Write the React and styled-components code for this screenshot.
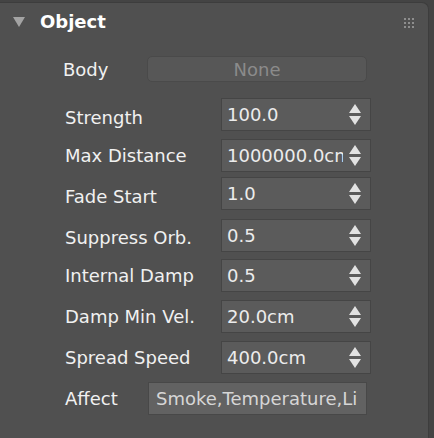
import styled, { createGlobalStyle } from "styled-components";

const Global = createGlobalStyle`
  html, body {
    margin: 0;
    background: #444444;
  }
  body {
    font-family: "DejaVu Sans", "Noto Sans", sans-serif;
  }
`;

const Panel = styled.div`
  width: 429px;
  height: 436px;
  margin-top: 2px;
  background: #505050;
  border-top: 1px solid #3d3d3d;
  border-right: 1px solid #3d3d3d;
  border-top-right-radius: 7px;
  box-sizing: border-box;
  display: flex;
  flex-direction: column;
`;

const Header = styled.div`
  height: 38px;
  display: flex;
  align-items: center;
  padding: 0 14px 0 13px;
`;

const Caret = styled.div`
  width: 0;
  height: 0;
  border-left: 6px solid transparent;
  border-right: 6px solid transparent;
  border-top: 10px solid #a3a3a3;
  margin-right: 15px;
`;

const Title = styled.div`
  flex: 1;
  color: #ffffff;
  font-size: 18px;
  font-weight: 700;
  margin-top: -1px;
`;

const Grip = styled.div`
  display: grid;
  grid-template-columns: repeat(3, 2px);
  gap: 2px;
  margin-top: 2px;
  span {
    width: 2px;
    height: 2px;
    background: #8e8e8e;
  }
`;

const BodyRow = styled.div`
  display: flex;
  align-items: center;
  padding-left: 63px;
  margin-top: 15px;
  height: 26px;
`;

const Label = styled.div`
  width: ${(p) => p.$w}px;
  color: #f1f1f1;
  font-size: 18px;
  white-space: nowrap;
  margin-top: ${(p) => p.$drop || 0}px;
`;

const NoneBox = styled.div`
  width: 220px;
  height: 26px;
  box-sizing: border-box;
  background: #575757;
  border: 1px solid #4a4a4a;
  border-radius: 5px;
  color: #8b8b8b;
  font-size: 18px;
  display: flex;
  align-items: center;
  justify-content: center;
`;

const Rows = styled.div`
  display: flex;
  flex-direction: column;
  gap: 7px;
  margin-top: 16px;
  padding-left: 65px;
`;

const Row = styled.div`
  display: flex;
  align-items: center;
  height: 33px;
  margin-top: ${(p) => p.$shift || 0}px;
`;

const Spinner = styled.div`
  width: 150px;
  height: 33px;
  box-sizing: border-box;
  background: #5b5b5b;
  border: 1px solid #454545;
  display: flex;
  align-items: center;
  overflow: hidden;
`;

const Value = styled.div`
  flex: 1;
  min-width: 0;
  overflow: hidden;
  white-space: nowrap;
  color: #ececec;
  font-size: 18px;
  padding-left: 5px;
`;

const Arrows = styled.div`
  width: 24px;
  height: 100%;
  display: flex;
  flex-direction: column;
  align-items: center;
  justify-content: center;
  gap: 3px;
  flex-shrink: 0;
  padding-right: 3px;
`;

const Up = styled.div`
  width: 0;
  height: 0;
  border-left: 6px solid transparent;
  border-right: 6px solid transparent;
  border-bottom: 9px solid #e2e2e2;
`;

const Down = styled(Up)`
  border-bottom: none;
  border-top: 9px solid #e2e2e2;
`;

const AffectBox = styled.div`
  width: 219px;
  height: 33px;
  box-sizing: border-box;
  background: #626262;
  border: 1px solid #484848;
  color: #d6d6d6;
  font-size: 18px;
  padding-left: 7px;
  display: flex;
  align-items: center;
  white-space: nowrap;
  overflow: hidden;
`;

const params = [
  ["Strength", "100.0", 0, 5],
  ["Max Distance", "1000000.0cm", 1, 0],
  ["Fade Start", "1.0", -2, 5],
  ["Suppress Orb.", "0.5", 2, 3],
  ["Internal Damp", "0.5", 0, 0],
  ["Damp Min Vel.", "20.0cm", 1, 0],
  ["Spread Speed", "400.0cm", 1, 0],
];

export default function App() {
  return (
    <>
      <Global />
      <Panel>
        <Header>
          <Caret />
          <Title>Object</Title>
          <Grip>
            {Array.from({ length: 9 }).map((_, i) => (
              <span key={i} />
            ))}
          </Grip>
        </Header>
        <BodyRow>
          <Label $w={84}>Body</Label>
          <NoneBox>None</NoneBox>
        </BodyRow>
        <Rows>
          {params.map(([name, val, shift, drop]) => (
            <Row key={name} $shift={shift}>
              <Label $w={156} $drop={drop}>{name}</Label>
              <Spinner>
                <Value>{val}</Value>
                <Arrows>
                  <Up />
                  <Down />
                </Arrows>
              </Spinner>
            </Row>
          ))}
          <Row $shift={1}>
            <Label $w={83}>Affect</Label>
            <AffectBox>Smoke,Temperature,Li</AffectBox>
          </Row>
        </Rows>
      </Panel>
    </>
  );
}
